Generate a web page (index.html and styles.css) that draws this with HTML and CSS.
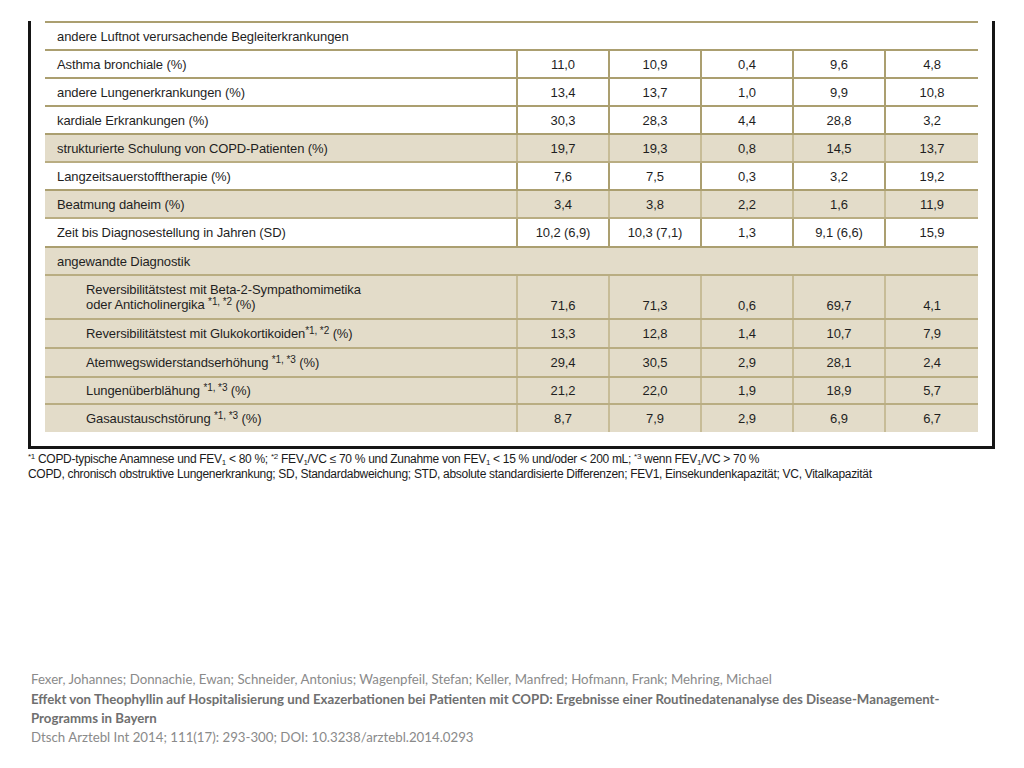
FILE: index.html
```html
<!DOCTYPE html>
<html lang="de">
<head>
<meta charset="utf-8">
<title>COPD Tabelle</title>
<link rel="stylesheet" href="styles.css">
</head>
<body>
<div class="frame">
  <table class="data">
    <colgroup>
      <col class="c-label"><col class="c-num"><col class="c-num"><col class="c-num"><col class="c-num"><col class="c-last">
    </colgroup>
    <tbody>
      <tr class="white section"><td colspan="6">andere Luftnot verursachende Begleiterkrankungen</td></tr>
      <tr class="white"><td>Asthma bronchiale (%)</td><td>11,0</td><td>10,9</td><td>0,4</td><td>9,6</td><td>4,8</td></tr>
      <tr class="white"><td>andere Lungenerkrankungen (%)</td><td>13,4</td><td>13,7</td><td>1,0</td><td>9,9</td><td>10,8</td></tr>
      <tr class="white"><td>kardiale Erkrankungen (%)</td><td>30,3</td><td>28,3</td><td>4,4</td><td>28,8</td><td>3,2</td></tr>
      <tr class="tan"><td>strukturierte Schulung von COPD-Patienten (%)</td><td>19,7</td><td>19,3</td><td>0,8</td><td>14,5</td><td>13,7</td></tr>
      <tr class="white"><td>Langzeitsauerstofftherapie (%)</td><td>7,6</td><td>7,5</td><td>0,3</td><td>3,2</td><td>19,2</td></tr>
      <tr class="tan"><td>Beatmung daheim (%)</td><td>3,4</td><td>3,8</td><td>2,2</td><td>1,6</td><td>11,9</td></tr>
      <tr class="white tall"><td>Zeit bis Diagnosestellung in Jahren (SD)</td><td>10,2 (6,9)</td><td>10,3 (7,1)</td><td>1,3</td><td>9,1 (6,6)</td><td>15,9</td></tr>
      <tr class="tan section"><td colspan="6">angewandte Diagnostik</td></tr>
      <tr class="tan double sub"><td>Reversibilitätstest mit Beta-2-Sympathomimetika<br>oder Anticholinergika <sup>*1, *2</sup> (%)</td><td>71,6</td><td>71,3</td><td>0,6</td><td>69,7</td><td>4,1</td></tr>
      <tr class="tan sub tall"><td>Reversibilitätstest mit Glukokortikoiden<sup>*1, *2</sup> (%)</td><td>13,3</td><td>12,8</td><td>1,4</td><td>10,7</td><td>7,9</td></tr>
      <tr class="tan sub tall"><td>Atemwegswiderstandserhöhung <sup>*1, *3</sup> (%)</td><td>29,4</td><td>30,5</td><td>2,9</td><td>28,1</td><td>2,4</td></tr>
      <tr class="tan sub short"><td>Lungenüberblähung <sup>*1, *3</sup> (%)</td><td>21,2</td><td>22,0</td><td>1,9</td><td>18,9</td><td>5,7</td></tr>
      <tr class="tan sub last tall"><td>Gasaustauschstörung <sup>*1, *3</sup> (%)</td><td>8,7</td><td>7,9</td><td>2,9</td><td>6,9</td><td>6,7</td></tr>
    </tbody>
  </table>
</div>
<div class="notes">
  <p><sup>*1</sup> COPD-typische Anamnese und FEV<sub>1</sub> &lt; 80 %; <sup>*2</sup> FEV<sub>1</sub>/VC ≤ 70 % und Zunahme von FEV<sub>1</sub> &lt; 15 % und/oder &lt; 200 mL; <sup>*3</sup> wenn FEV<sub>1</sub>/VC &gt; 70 %</p>
  <p>COPD, chronisch obstruktive Lungenerkrankung; SD, Standardabweichung; STD, absolute standardisierte Differenzen; FEV1, Einsekundenkapazität; VC, Vitalkapazität</p>
</div>
<div class="citation">
  <p>Fexer, Johannes; Donnachie, Ewan; Schneider, Antonius; Wagenpfeil, Stefan; Keller, Manfred; Hofmann, Frank; Mehring, Michael</p>
  <p class="title">Effekt von Theophyllin auf Hospitalisierung und Exazerbationen bei Patienten mit COPD: Ergebnisse einer Routinedatenanalyse des Disease-Management-Programms in Bayern</p>
  <p>Dtsch Arztebl Int 2014; 111(17): 293-300; DOI: 10.3238/arztebl.2014.0293</p>
</div>
</body>
</html>
```

FILE: styles.css
```css
html, body {
  margin: 0;
  padding: 0;
  background: #ffffff;
}

body {
  padding-top: 21px;
  font-family: "Liberation Sans", Arial, sans-serif;
  color: #1f1f1f;
}

.frame {
  margin-left: 28px;
  width: 933px;
  padding: 0 14px 14px 14px;
  border-left: 3px solid #151515;
  border-right: 3px solid #151515;
  border-bottom: 3px solid #151515;
}

.data {
  width: 933px;
  border-collapse: collapse;
  table-layout: fixed;
  font-size: 13px;
  letter-spacing: -0.1px;
  border-top: 2px solid #ab9f70;
}

.c-label { width: 472px; }
.c-num { width: 92px; }
.c-last { width: 93px; }

.data td {
  height: 26px;
  padding: 0;
  text-align: center;
  vertical-align: middle;
  border-bottom: 2px solid #ab9f70;
  border-left: 2px solid #ab9f70;
  line-height: 15px;
}

.data td:first-child {
  text-align: left;
  padding-left: 12px;
  border-left: none;
}

.data tr.tan td {
  background: #e3dcc9;
  border-left-color: #c7bc97;
  border-bottom-color: #b9ad82;
}

.data tr.tan td:first-child {
  border-left: none;
}

.data tr.white td {
  background: #ffffff;
}

.data tr.tall td { height: 27px; }
.data tr.short td { height: 25px; }

.data tr.sub td:first-child {
  padding-left: 41px;
}

.data tr.double td {
  height: 37px;
  vertical-align: bottom;
  padding-bottom: 5px;
}

.data tr.double td:first-child {
  height: 42px;
  vertical-align: middle;
  padding-bottom: 0;
  line-height: 15px;
}

.data tr.last td {
  border-bottom: none;
}

.data sup {
  font-size: 10px;
  line-height: 0;
  vertical-align: 4px;
}

.notes {
  margin: 3px 0 0 28px;
  font-size: 12px;
  letter-spacing: -0.3px;
  color: #1a1a1a;
}

.notes p {
  margin: 0;
  line-height: 15px;
}

.notes sup {
  font-size: 8px;
  line-height: 0;
  vertical-align: 4px;
}

.notes sub {
  font-size: 8px;
  line-height: 0;
  vertical-align: -2px;
}

.citation {
  margin: 188px 0 0 31px;
  width: 915px;
  font-family: Lato, "Open Sans", sans-serif;
  font-size: 13.25px;
  color: #8a8a8a;
}

.citation p {
  margin: 0 0 1px 0;
  line-height: 19px;
}

.citation .title {
  font-weight: bold;
  color: #6f6f6f;
  margin: 0;
}
```
